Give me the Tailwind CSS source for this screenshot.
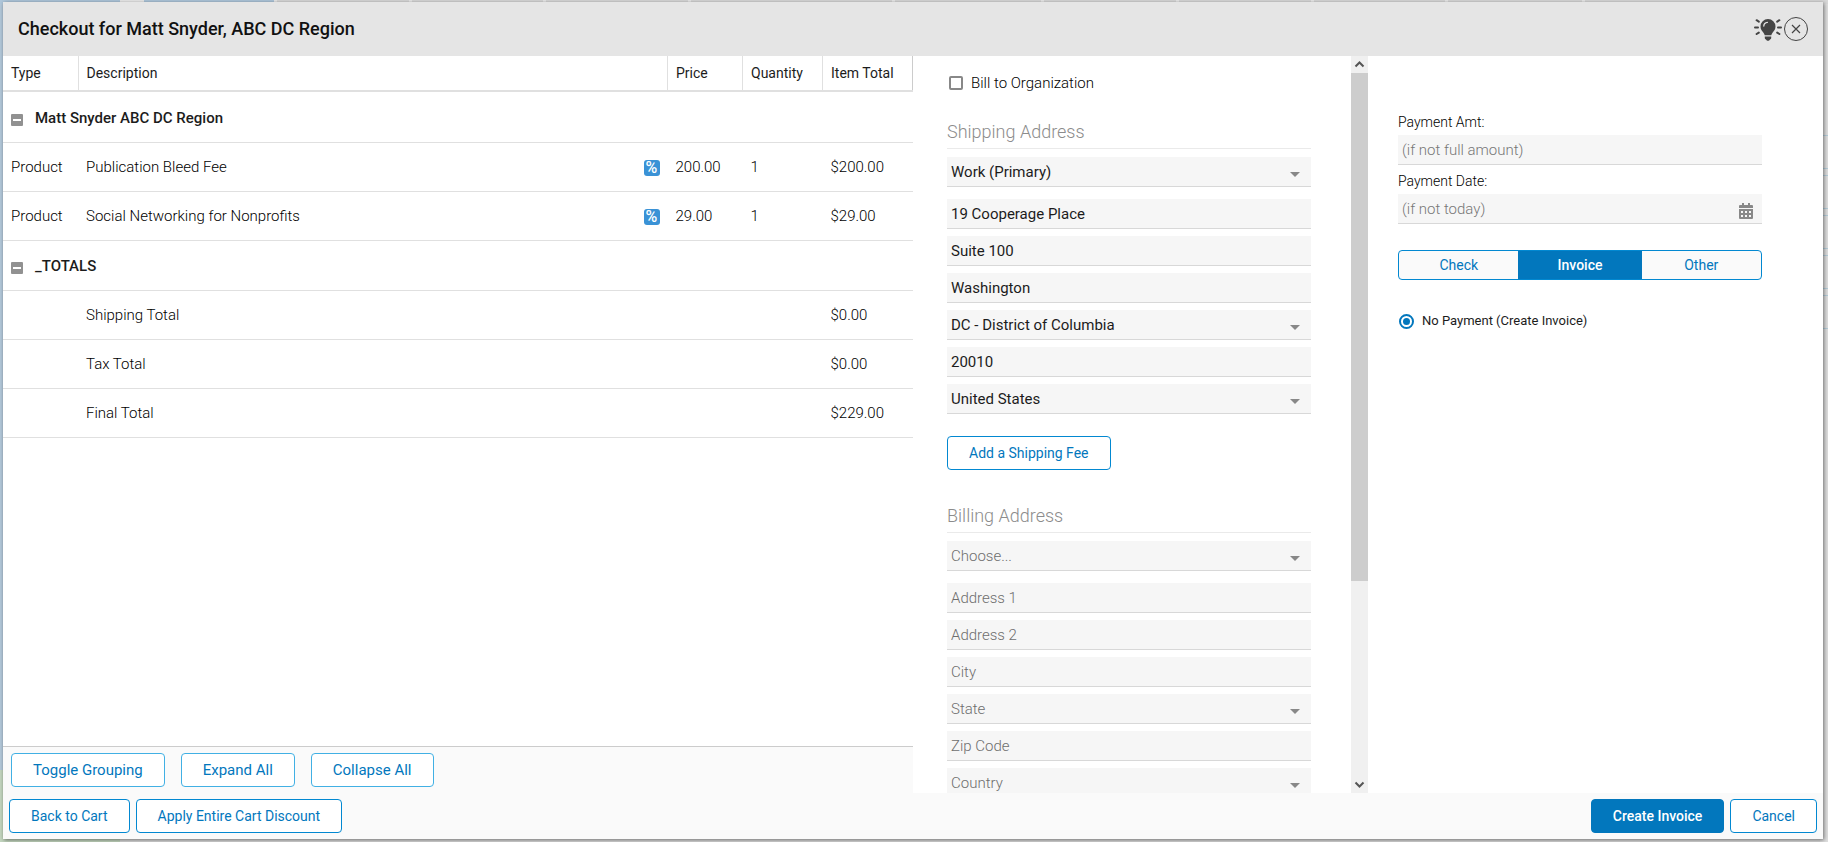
<!DOCTYPE html>
<html lang="en">
<head>
    <meta charset="UTF-8">
    <meta name="viewport" content="width=device-width, initial-scale=1.0">
    <title>Checkout</title>
    <script src="https://cdn.jsdelivr.net/npm/@tailwindcss/browser@4"></script>
</head>
<body class="relative h-screen overflow-hidden bg-[#d9d9d9] font-['Roboto',sans-serif] text-[#1c1c1c]">
    <!-- Page behind the dialog -->
    <div class="absolute inset-0 flex flex-col" aria-hidden="true">
        <div class="flex h-1 gap-[3px] bg-[#ebebeb]">
            <div class="mr-[21px] w-[120px] bg-[#afc7db]"></div>
            <div class="w-[130px] bg-[#afc7db]"></div>
            <div class="w-[132px] bg-[#d9d9d9]"></div>
            <div class="w-[131px] bg-[#d9d9d9]"></div>
            <div class="w-[142px] bg-[#d9d9d9]"></div>
            <div class="w-[201px] bg-[#d9d9d9]"></div>
            <div class="w-[146px] bg-[#d9d9d9]"></div>
            <div class="w-[132px] bg-[#d9d9d9]"></div>
            <div class="w-[132px] bg-[#d9d9d9]"></div>
            <div class="w-[131px] bg-[#d9d9d9]"></div>
            <div class="w-[134px] bg-[#d9d9d9]"></div>
            <div class="flex-1 bg-[#d9d9d9]"></div>
        </div>
        <div class="flex flex-1">
            <div class="flex w-[120px] flex-col">
                <div class="flex-1 bg-[#b3c8da]"></div>
                <div class="h-[72px] bg-[#c3d6bf]"></div>
            </div>
            <div class="flex-1"></div>
            <div class="flex w-2 flex-col gap-[6px] bg-[#dedede] pt-[131px]">
                <div class="h-[34px] border-y border-[#b4ccd9]"></div>
                <div class="h-[34px] border-y border-[#b4ccd9]"></div>
                <div class="h-[34px] border-y border-[#b4ccd9]"></div>
                <div class="h-[34px] border-y border-[#b4ccd9]"></div>
                <div class="h-[34px] border-y border-[#b4ccd9]"></div>
            </div>
        </div>
    </div>

    <!-- Checkout dialog -->
    <div role="dialog" aria-labelledby="title" class="absolute top-[2px] right-[5px] bottom-[3px] left-[3px] flex flex-col bg-white shadow-[1px_1px_4px_rgba(0,0,0,0.5)]">
        <header class="flex h-[54px] shrink-0 items-center justify-between bg-[#e5e5e5] px-[15px]">
            <h1 id="title" class="text-lg font-medium text-[#111]">Checkout for Matt Snyder, ABC DC Region</h1>
            <div class="flex items-center gap-[2px]">
                <button type="button" aria-label="Tips">
                    <svg class="size-7" viewBox="0 0 28 28" fill="none">
                        <path d="M14 4a7.500 7.500 0 0 0-7.500 7.500c0 3 1.500 4.500 2.800 6 .8 1 1.200 1.800 1.400 2.700h6.600c.2-.9.6-1.700 1.400-2.700 1.300-1.500 2.800-3 2.800-6A7.500 7.500 0 0 0 14 4z" fill="#444"/>
                        <path d="M10.800 21.600h6.400v1.500c0 .8-.6 1.300-1.200 1.400-.4.900-1.200 1.300-2 1.300s-1.600-.4-2-1.300c-.6-.1-1.200-.6-1.200-1.400z" fill="#444"/>
                        <path d="M9.800 11c.1-1.900 1.400-3.500 3.600-3.700" stroke="#e5e5e5" stroke-width="1.300" stroke-linecap="round"/>
                        <path d="M1 12.500h3M24 12.500h3M2.600 5.200l2.200 1.400M25.400 5.200l-2.200 1.400M2.600 19l2.200-1.400M25.400 19l-2.200-1.400" stroke="#444" stroke-width="2" stroke-linecap="round"/>
                    </svg>
                </button>
                <button type="button" aria-label="Close">
                    <svg class="size-6" viewBox="0 0 24 24" fill="none" stroke="#444">
                        <circle cx="12" cy="12" r="11.500"/>
                        <path d="M8 8l8 8M16 8l-8 8" stroke-width="1.200"/>
                    </svg>
                </button>
            </div>
        </header>

        <main class="flex min-h-0 flex-1">
            <!-- Cart items -->
            <section class="flex w-1/2 flex-col">
                <div class="flex-1 overflow-hidden">
                    <table class="w-full table-fixed border-collapse text-left text-[15px] font-light text-black">
                        <colgroup>
                            <col class="w-[75px]">
                            <col>
                            <col class="w-[75px]">
                            <col class="w-20">
                            <col class="w-[90px]">
                        </colgroup>
                        <thead>
                            <tr class="h-[35px] border-b-2 border-[#e0e0e0] text-sm text-[#1c1c1c]">
                                <th class="border-r border-[#e0e0e0] px-2 font-normal">Type</th>
                                <th class="border-r border-[#e0e0e0] px-2 font-normal">Description</th>
                                <th class="border-r border-[#e0e0e0] px-2 font-normal">Price</th>
                                <th class="border-r border-[#e0e0e0] px-2 font-normal">Quantity</th>
                                <th class="border-r border-[#ccc] px-2 font-normal">Item Total</th>
                            </tr>
                        </thead>
                        <tbody>
                            <tr class="h-[51px] border-b border-[#e0e0e0]">
                                <td colspan="5" class="px-2 pt-[2px]">
                                    <div class="flex items-center gap-3 font-medium text-[#1c1c1c]">
                                        <button type="button" aria-label="Collapse group" class="mt-1 flex size-3 items-center justify-center rounded-[1px] bg-[#919191]"><span class="h-[2px] w-2 bg-white"></span></button>
                                        Matt Snyder ABC DC Region
                                    </div>
                                </td>
                            </tr>
                            <tr class="h-[49px] border-b border-[#e0e0e0]">
                                <td class="px-2 pt-[2px]">Product</td>
                                <td class="px-2 pt-[2px]">
                                    <div class="flex items-center justify-between">
                                        Publication Bleed Fee
                                        <button type="button" aria-label="Discount" class="flex size-4 items-center justify-center rounded-[3px] bg-[#3a92d6] text-base leading-4 font-medium text-white">%</button>
                                    </div>
                                </td>
                                <td class="px-2 pt-[2px]">200.00</td>
                                <td class="px-2 pt-[2px]">1</td>
                                <td class="px-2 pt-[2px]">$200.00</td>
                            </tr>
                            <tr class="h-[49px] border-b border-[#e0e0e0]">
                                <td class="px-2 pt-[2px]">Product</td>
                                <td class="px-2 pt-[2px]">
                                    <div class="flex items-center justify-between">
                                        Social Networking for Nonprofits
                                        <button type="button" aria-label="Discount" class="flex size-4 items-center justify-center rounded-[3px] bg-[#3a92d6] text-base leading-4 font-medium text-white">%</button>
                                    </div>
                                </td>
                                <td class="px-2 pt-[2px]">29.00</td>
                                <td class="px-2 pt-[2px]">1</td>
                                <td class="px-2 pt-[2px]">$29.00</td>
                            </tr>
                            <tr class="h-[50px] border-b border-[#e0e0e0]">
                                <td colspan="5" class="px-2 pt-[2px]">
                                    <div class="flex items-center gap-3 font-medium text-[#1c1c1c]">
                                        <button type="button" aria-label="Collapse group" class="mt-1 flex size-3 items-center justify-center rounded-[1px] bg-[#919191]"><span class="h-[2px] w-2 bg-white"></span></button>
                                        _TOTALS
                                    </div>
                                </td>
                            </tr>
                            <tr class="h-[49px] border-b border-[#e0e0e0]">
                                <td></td>
                                <td class="px-2 pt-[2px]" colspan="3">Shipping Total</td>
                                <td class="px-2 pt-[2px]">$0.00</td>
                            </tr>
                            <tr class="h-[49px] border-b border-[#e0e0e0]">
                                <td></td>
                                <td class="px-2 pt-[2px]" colspan="3">Tax Total</td>
                                <td class="px-2 pt-[2px]">$0.00</td>
                            </tr>
                            <tr class="h-[49px] border-b border-[#e0e0e0]">
                                <td></td>
                                <td class="px-2 pt-[2px]" colspan="3">Final Total</td>
                                <td class="px-2 pt-[2px]">$229.00</td>
                            </tr>
                        </tbody>
                    </table>
                </div>
                <div class="flex gap-4 border-t border-[#ccc] bg-[#fafafa] px-2 py-[6px] text-[15px] text-[#0277bd]">
                    <button type="button" class="h-[34px] rounded border border-[#41b0e4] bg-white px-[21px]">Toggle Grouping</button>
                    <button type="button" class="h-[34px] rounded border border-[#41b0e4] bg-white px-[21px]">Expand All</button>
                    <button type="button" class="h-[34px] rounded border border-[#41b0e4] bg-white px-[21px]">Collapse All</button>
                </div>
            </section>

            <!-- Addresses -->
            <section class="flex w-1/4">
                <div class="flex-1 overflow-hidden pt-[14px] pr-10 pl-[34px] text-[15px]">
                    <label class="flex h-[26px] items-center gap-2 pl-[2px] font-light text-black">
                        <input type="checkbox" class="size-[14px] appearance-none rounded-[2px] border-2 border-[#888] bg-white">
                        Bill to Organization
                    </label>

                    <h2 class="mt-[21px] h-8 border-b border-[#eaeaea] text-lg leading-[30px] font-light text-[#8c8c8c]">Shipping Address</h2>
                    <div class="mt-2 flex flex-col gap-[7px]">
                        <div class="relative mb-[5px]">
                            <select aria-label="Shipping address" class="block h-[30px] w-full appearance-none border-b border-[#d8d8d8] bg-[#f6f6f6] px-1 pt-[2px]"><option>Work (Primary)</option></select>
                            <svg class="pointer-events-none absolute top-[15px] right-[11px] h-[5px] w-[10px]" viewBox="0 0 10 5"><path d="M0 0h10L5 5z" fill="#888"/></svg>
                        </div>
                        <input type="text" aria-label="Address 1" value="19 Cooperage Place" class="h-[30px] border-b border-[#d8d8d8] bg-[#f6f6f6] px-1">
                        <input type="text" aria-label="Address 2" value="Suite 100" class="h-[30px] border-b border-[#d8d8d8] bg-[#f6f6f6] px-1">
                        <input type="text" aria-label="City" value="Washington" class="h-[30px] border-b border-[#d8d8d8] bg-[#f6f6f6] px-1">
                        <div class="relative">
                            <select aria-label="State" class="block h-[30px] w-full appearance-none border-b border-[#d8d8d8] bg-[#f6f6f6] px-1 pt-[2px]"><option>DC - District of Columbia</option></select>
                            <svg class="pointer-events-none absolute top-[15px] right-[11px] h-[5px] w-[10px]" viewBox="0 0 10 5"><path d="M0 0h10L5 5z" fill="#888"/></svg>
                        </div>
                        <input type="text" aria-label="Zip Code" value="20010" class="h-[30px] border-b border-[#d8d8d8] bg-[#f6f6f6] px-1">
                        <div class="relative">
                            <select aria-label="Country" class="block h-[30px] w-full appearance-none border-b border-[#d8d8d8] bg-[#f6f6f6] px-1 pt-[2px]"><option>United States</option></select>
                            <svg class="pointer-events-none absolute top-[15px] right-[11px] h-[5px] w-[10px]" viewBox="0 0 10 5"><path d="M0 0h10L5 5z" fill="#888"/></svg>
                        </div>
                    </div>

                    <button type="button" class="mt-[22px] block h-[34px] rounded border border-[#0288d1] bg-white px-[21px] text-sm text-[#0277bd]">Add a Shipping Fee</button>

                    <h2 class="mt-[31px] h-8 border-b border-[#eaeaea] text-lg leading-[30px] font-light text-[#8c8c8c]">Billing Address</h2>
                    <div class="mt-2 flex flex-col gap-[7px] font-light text-[#6e6e6e]">
                        <div class="relative mb-[5px]">
                            <select aria-label="Billing address" class="block h-[30px] w-full appearance-none border-b border-[#d8d8d8] bg-[#f6f6f6] px-1 pt-[2px]"><option>Choose...</option></select>
                            <svg class="pointer-events-none absolute top-[15px] right-[11px] h-[5px] w-[10px]" viewBox="0 0 10 5"><path d="M0 0h10L5 5z" fill="#888"/></svg>
                        </div>
                        <input type="text" aria-label="Billing address 1" placeholder="Address 1" class="h-[30px] border-b border-[#d8d8d8] bg-[#f6f6f6] px-1 placeholder:text-[#6e6e6e]">
                        <input type="text" aria-label="Billing address 2" placeholder="Address 2" class="h-[30px] border-b border-[#d8d8d8] bg-[#f6f6f6] px-1 placeholder:text-[#6e6e6e]">
                        <input type="text" aria-label="Billing city" placeholder="City" class="h-[30px] border-b border-[#d8d8d8] bg-[#f6f6f6] px-1 placeholder:text-[#6e6e6e]">
                        <div class="relative">
                            <select aria-label="Billing state" class="block h-[30px] w-full appearance-none border-b border-[#d8d8d8] bg-[#f6f6f6] px-1 pt-[2px]"><option>State</option></select>
                            <svg class="pointer-events-none absolute top-[15px] right-[11px] h-[5px] w-[10px]" viewBox="0 0 10 5"><path d="M0 0h10L5 5z" fill="#888"/></svg>
                        </div>
                        <input type="text" aria-label="Billing zip code" placeholder="Zip Code" class="h-[30px] border-b border-[#d8d8d8] bg-[#f6f6f6] px-1 placeholder:text-[#6e6e6e]">
                        <div class="relative">
                            <select aria-label="Billing country" class="block h-[30px] w-full appearance-none border-b border-[#d8d8d8] bg-[#f6f6f6] px-1 pt-[2px]"><option>Country</option></select>
                            <svg class="pointer-events-none absolute top-[15px] right-[11px] h-[5px] w-[10px]" viewBox="0 0 10 5"><path d="M0 0h10L5 5z" fill="#888"/></svg>
                        </div>
                    </div>
                </div>
                <!-- Scrollbar -->
                <div class="flex w-[17px] flex-col bg-[#f0f0f0]">
                    <svg class="size-[17px]" viewBox="0 0 17 17" fill="none" stroke="#555" stroke-width="2"><path d="M4.500 10.500l4-4 4 4"/></svg>
                    <div class="grow-[508] bg-[#cdcdcd]"></div>
                    <div class="grow-[195]"></div>
                    <svg class="size-[17px]" viewBox="0 0 17 17" fill="none" stroke="#555" stroke-width="2"><path d="M4.500 6.500l4 4 4-4"/></svg>
                </div>
            </section>

            <!-- Payment -->
            <section class="w-1/4 pt-[55px] pr-[61px] pl-[30px]">
                <label for="amount" class="block h-6 text-sm leading-[22px] font-light text-black">Payment Amt:</label>
                <input id="amount" type="text" placeholder="(if not full amount)" class="block h-[30px] w-full border-b border-[#d8d8d8] bg-[#f6f6f6] px-1 text-[15px] font-light placeholder:text-[#777]">
                <label for="date" class="mt-[5px] block h-6 text-sm leading-[22px] font-light text-black">Payment Date:</label>
                <div class="relative">
                    <input id="date" type="text" placeholder="(if not today)" class="block h-[30px] w-full border-b border-[#d8d8d8] bg-[#f6f6f6] px-1 text-[15px] font-light placeholder:text-[#777]">
                    <svg class="pointer-events-none absolute top-[9px] right-[9px] h-4 w-[14px]" viewBox="0 0 14 16">
                        <path fill="#888" fill-rule="evenodd" d="M3 0h2v2h4V0h2v2h2a1 1 0 0 1 1 1v2H0V3a1 1 0 0 1 1-1h2zM0 6h14v9a1 1 0 0 1-1 1H1a1 1 0 0 1-1-1zM2 8v2h2V8zm4 0v2h2V8zm4 0v2h2V8zM2 12v2h2v-2zm4 0v2h2v-2zm4 0v2h2v-2z"/>
                    </svg>
                </div>
                <div class="mt-[26px] flex h-[30px] overflow-hidden rounded border border-[#0288d1] bg-[#fafafa] text-sm text-[#0277bd]">
                    <button type="button" class="flex-1">Check</button>
                    <button type="button" class="w-[34%] bg-[#0277bd] font-medium text-white">Invoice</button>
                    <button type="button" class="flex-1">Other</button>
                </div>
                <label class="mt-[31px] flex items-center gap-2 pl-px text-[13px] leading-5">
                    <input type="radio" name="payment" checked class="size-[15px] appearance-none rounded-full border-2 border-[#0277bd] bg-[#0277bd] bg-clip-content p-[2px]">
                    No Payment (Create Invoice)
                </label>
            </section>
        </main>

        <footer class="flex h-[46px] shrink-0 items-center justify-between bg-[#fafafa] px-[6px] text-sm text-[#0277bd]">
            <div class="flex gap-[6px]">
                <button type="button" class="h-[34px] rounded border border-[#0288d1] bg-white px-[21px]">Back to Cart</button>
                <button type="button" class="h-[34px] rounded border border-[#0288d1] bg-white px-[21px]">Apply Entire Cart Discount</button>
            </div>
            <div class="flex gap-[6px]">
                <button type="button" class="h-[34px] rounded border border-[#0277bd] bg-[#0277bd] px-[21px] font-medium text-white">Create Invoice</button>
                <button type="button" class="h-[34px] rounded border border-[#0288d1] bg-white px-[21px]">Cancel</button>
            </div>
        </footer>
    </div>
</body>
</html>
